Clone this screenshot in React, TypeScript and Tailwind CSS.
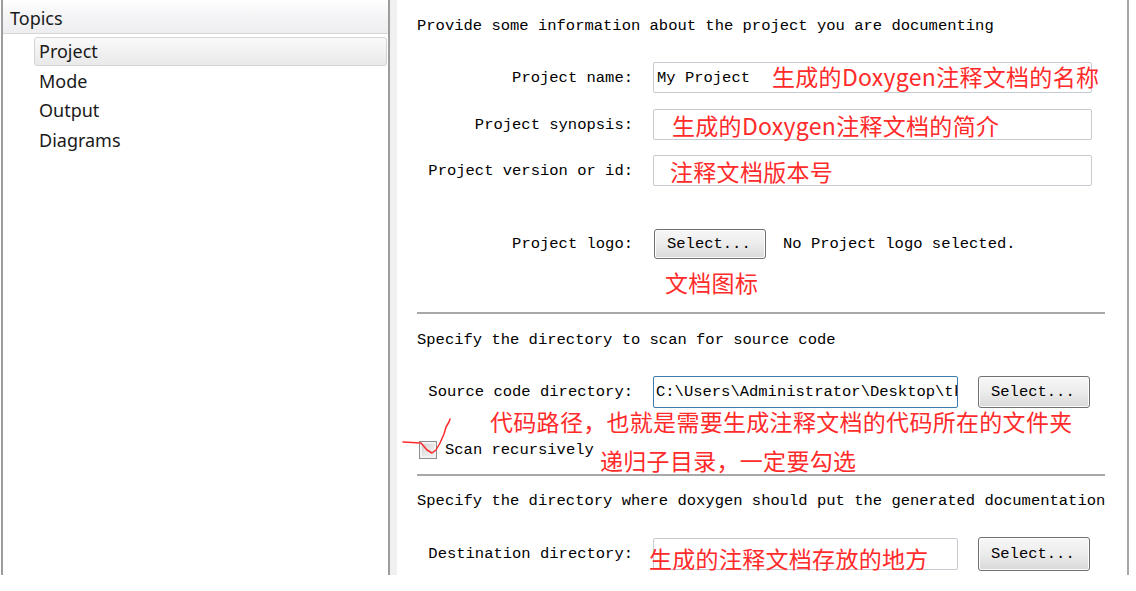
import React from "react";

const mono = "font-['Liberation_Mono','DejaVu_Sans_Mono',monospace] text-[15.5px] leading-[20px] text-black whitespace-pre";

function Label({ children }: { children: React.ReactNode }) {
  return <div className={"w-[216px] text-right " + mono}>{children}</div>;
}

function SelectButton({ h }: { h: string }) {
  return (
    <div
      className={
        "w-[112px] " +
        h +
        " border border-[#707070] rounded-[3px] bg-linear-to-b from-[#f7f7f7] via-[#ececec] to-[#d9d9d9] flex items-center pl-[12px] shadow-[inset_0_0_0_1px_#fcfcfc]"
      }
    >
      <span className={mono}>Select...</span>
    </div>
  );
}

function Note({ x, y, text }: { x: number; y: number; text: string }) {
  return (
    <div
      className="absolute text-[23px] leading-[30px] tracking-[0.3px] text-[#ff2b2b] font-['Noto_Sans_CJK_SC','Noto_Sans',sans-serif] whitespace-nowrap"
      style={{ left: x, top: y - 15 }}
    >
      {text}
    </div>
  );
}

export default function App() {
  return (
    <div className="relative w-[1136px] h-[591px] bg-white overflow-hidden">
      <div className="flex h-[575px]">
        {/* Left panel */}
        <div className="ml-[1px] w-[389px] h-full border-l-2 border-r-2 border-[#9c9c9c] flex flex-col bg-white font-['Noto_Sans',sans-serif]">
          <div className="h-[34px] shrink-0 bg-linear-to-b from-white via-[#f4f4f6] to-[#eeeef0] border-b border-[#d6d6d6] pl-[7px] pt-[5px] text-[18px] leading-[26px] text-[#1a1a1a]">
            Topics
          </div>
          <div className="flex flex-col pt-[3px]">
            <div className="ml-[31px] mr-[1px] h-[29px] rounded-[3px] border border-[#d4d4d4] bg-linear-to-b from-[#fafafa] to-[#e9e9e9] flex items-center pl-[4px] text-[18px] text-[#1a1a1a]">
              Project
            </div>
            <div className="ml-[36px] h-[30px] flex items-center text-[18px] text-[#1a1a1a]">Mode</div>
            <div className="ml-[36px] h-[29px] flex items-center text-[18px] text-[#1a1a1a]">Output</div>
            <div className="ml-[36px] h-[30px] flex items-center text-[18px] text-[#1a1a1a]">Diagrams</div>
          </div>
        </div>
        {/* Splitter */}
        <div className="w-[7px] h-full bg-[#f0f0f0]" />
        {/* Right panel */}
        <div className="w-[732px] h-full border-r-2 border-[#a6a6a6] bg-white pl-[20px] flex flex-col">
          <div className={"mt-[16px] h-[20px] " + mono}>Provide some information about the project you are documenting</div>

          <div className="mt-[26px] h-[31px] flex items-center">
            <Label>Project name:</Label>
            <div className="ml-[20px] w-[439px] h-[31px] border border-[#c6cad1] rounded-[2px] flex items-center pl-[3px]">
              <span className={mono}>My Project</span>
            </div>
          </div>

          <div className="mt-[16px] h-[31px] flex items-center">
            <Label>Project synopsis:</Label>
            <div className="ml-[20px] w-[439px] h-[31px] border border-[#c6cad1] rounded-[2px]" />
          </div>

          <div className="mt-[15px] h-[31px] flex items-center">
            <Label>Project version or id:</Label>
            <div className="ml-[20px] w-[439px] h-[31px] border border-[#c6cad1] rounded-[2px]" />
          </div>

          <div className="mt-[43px] h-[30px] flex items-center">
            <Label>Project logo:</Label>
            <div className="ml-[21px]">
              <SelectButton h="h-[30px]" />
            </div>
            <span className={"ml-[17px] " + mono}>No Project logo selected.</span>
          </div>

          <div className="mt-[53px] h-[2px] w-[688px] bg-[#a8a8a8]" />

          <div className={"mt-[16px] h-[20px] " + mono}>Specify the directory to scan for source code</div>

          <div className="mt-[26px] h-[32px] flex items-center">
            <Label>Source code directory:</Label>
            <div className="ml-[20px] w-[305px] h-[32px] border border-[#3d7bad] rounded-[2px] flex items-center pl-[2px] overflow-hidden">
              <span className={mono}>C:\Users\Administrator\Desktop\tk</span>
            </div>
            <div className="ml-[20px]">
              <SelectButton h="h-[32px]" />
            </div>
          </div>

          <div className="mt-[32px] h-[20px] flex items-center">
            <div className="ml-[2px] w-[18px] h-[18px] border border-[#8e8f8f] bg-linear-to-br from-[#c8c8c8] via-[#e6e6e6] to-[#f4f4f4] shadow-[inset_0_0_0_2px_#f3f3f3]" />
            <span className={"ml-[8px] " + mono}>Scan recursively</span>
          </div>

          <div className="mt-[14px] h-[2px] w-[688px] bg-[#a8a8a8]" />

          <div className={"mt-[15px] h-[20px] " + mono}>Specify the directory where doxygen should put the generated documentation</div>

          <div className="mt-[27px] h-[32px] flex items-center">
            <Label>Destination directory:</Label>
            <div className="ml-[20px] w-[305px] h-[32px] border border-[#c6cad1] rounded-[2px]" />
            <div className="ml-[20px]">
              <SelectButton h="h-[34px]" />
            </div>
          </div>
        </div>
      </div>

      {/* Red annotations */}
      <Note x={772} y={76} text="生成的Doxygen注释文档的名称" />
      <Note x={672} y={125} text="生成的Doxygen注释文档的简介" />
      <Note x={670} y={171} text="注释文档版本号" />
      <Note x={665} y={282} text="文档图标" />
      <Note x={490} y={421} text="代码路径，也就是需要生成注释文档的代码所在的文件夹" />
      <Note x={600} y={460} text="递归子目录，一定要勾选" />
      <Note x={649} y={558} text="生成的注释文档存放的地方" />

      <svg className="absolute left-0 top-0" width="1136" height="591" viewBox="0 0 1136 591" fill="none">
        <polyline
          points="403,442 421,443 427,450 432,453 436,450 440,443 444,434 446,427 449,422 450,419"
          stroke="#ff2b2b"
          strokeWidth="1.5"
          strokeLinejoin="round"
          strokeLinecap="round"
        />
      </svg>
    </div>
  );
}
